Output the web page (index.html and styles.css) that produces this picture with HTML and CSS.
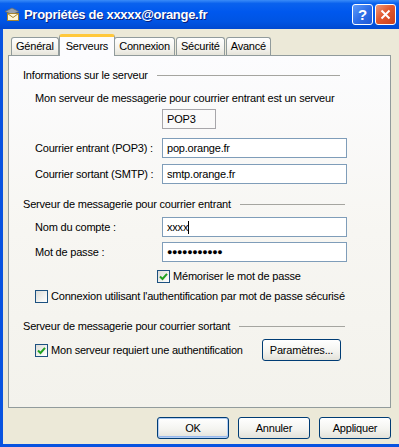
FILE: index.html
```html
<!DOCTYPE html>
<html lang="fr">
<head>
    <meta charset="UTF-8">
    <meta name="viewport" content="width=device-width, initial-scale=1.0">
    <title>Propriétés de xxxxx@orange.fr</title>
    <link rel="stylesheet" href="styles.css">
</head>
<body>
    <div class="window">
        <div class="titlebar">
            <svg class="title-icon" width="16" height="16" viewBox="0 0 16 16">
                <path d="M1 5.5 L8 2 L15 5.5 L8 8.5 Z" fill="#9aa3ad" stroke="#5d6670" stroke-width="0.8"/>
                <rect x="3.5" y="7.5" width="11" height="7" fill="#fdf6d8" stroke="#a6842f" stroke-width="1"/>
                <path d="M3.5 7.5 L9 11.5 L14.5 7.5" fill="none" stroke="#a6842f" stroke-width="1"/>
            </svg>
            <span class="title">Propriétés de xxxxx@orange.fr</span>
            <div class="title-buttons">
                <span class="tb-btn help">?</span>
                <span class="tb-btn close">
                    <svg width="11" height="11" viewBox="0 0 11 11">
                        <path d="M1.5 1.5 L9.5 9.5 M9.5 1.5 L1.5 9.5" stroke="#fff" stroke-width="2"/>
                    </svg>
                </span>
            </div>
        </div>

        <div class="frame">
            <div class="tabs">
                <div class="tab">Général</div>
                <div class="tab active">Serveurs</div>
                <div class="tab">Connexion</div>
                <div class="tab">Sécurité</div>
                <div class="tab">Avancé</div>
            </div>

            <div class="panel">
                <div class="group-title first">
                    <span>Informations sur le serveur</span>
                    <span class="rule"></span>
                </div>
                <p class="desc">Mon serveur de messagerie pour courrier entrant est un serveur</p>
                <div class="server-type">POP3</div>

                <div class="field-row row-in">
                    <label>Courrier entrant (POP3) :</label>
                    <div class="field">pop.orange.fr</div>
                </div>
                <div class="field-row">
                    <label>Courrier sortant (SMTP) :</label>
                    <div class="field">smtp.orange.fr</div>
                </div>

                <div class="group-title second">
                    <span>Serveur de messagerie pour courrier entrant</span>
                    <span class="rule"></span>
                </div>
                <div class="field-row">
                    <label>Nom du compte :</label>
                    <div class="field">xxxx<span class="caret"></span></div>
                </div>
                <div class="field-row row-pass">
                    <label>Mot de passe :</label>
                    <div class="field dots">●●●●●●●●●●●</div>
                </div>

                <div class="check check-remember">
                    <span class="box checked"><svg width="9" height="9" viewBox="0 0 9 9"><path d="M1 4.5 L3.5 7 L8 1.8" fill="none" stroke="#21a121" stroke-width="2"/></svg></span>
                    Mémoriser le mot de passe
                </div>
                <div class="check check-spa">
                    <span class="box"></span>
                    Connexion utilisant l'authentification par mot de passe sécurisé
                </div>

                <div class="group-title third">
                    <span>Serveur de messagerie pour courrier sortant</span>
                    <span class="rule"></span>
                </div>
                <div class="auth-row">
                    <div class="check">
                        <span class="box checked"><svg width="9" height="9" viewBox="0 0 9 9"><path d="M1 4.5 L3.5 7 L8 1.8" fill="none" stroke="#21a121" stroke-width="2"/></svg></span>
                        Mon serveur requiert une authentification
                    </div>
                    <button class="btn btn-settings">Paramètres...</button>
                </div>
            </div>

            <div class="actions">
                <button class="btn default">OK</button>
                <button class="btn">Annuler</button>
                <button class="btn">Appliquer</button>
            </div>
        </div>
    </div>
</body>
</html>
```

FILE: styles.css
```css
* {
    margin: 0;
    padding: 0;
    box-sizing: border-box;
}

body {
    font-family: 'Liberation Sans', Arial, sans-serif;
    font-size: 11px;
    letter-spacing: -0.2px;
    color: #000;
    background: #ece9d8;
}

.window {
    width: 399px;
    height: 447px;
    display: flex;
    flex-direction: column;
    background: #0853e0;
}

/* title bar */
.titlebar {
    height: 29px;
    flex: none;
    display: flex;
    align-items: center;
    padding: 0 3px 0 4px;
    background: linear-gradient(to bottom, #3a8cf8 0%, #0a62ee 12%, #0058ee 40%, #0054e3 75%, #0048d0 100%);
}

.title-icon {
    flex: none;
    margin-top: -1px;
}

.title {
    margin-left: 4px;
    color: #fff;
    font-weight: bold;
    font-size: 13px;
    letter-spacing: -0.3px;
    text-shadow: 1px 1px 0 #0a1e7a;
}

.title-buttons {
    margin-left: auto;
    display: flex;
    gap: 2px;
    margin-top: -1px;
}

.tb-btn {
    width: 21px;
    height: 21px;
    border: 1px solid #fff;
    border-radius: 3px;
    display: flex;
    align-items: center;
    justify-content: center;
    color: #fff;
}

.help {
    background: linear-gradient(135deg, #5f9cfa 0%, #2f6fe8 50%, #1f58d6 100%);
    font-weight: bold;
    font-size: 15px;
}

.close {
    background: linear-gradient(135deg, #f09a7c 0%, #e2582e 45%, #c8401c 100%);
}

/* dialog body */
.frame {
    flex: 1;
    margin: 0 0 3px 3px;
    background: #ece9d8;
    display: flex;
    flex-direction: column;
}

.tabs {
    height: 26px;
    flex: none;
    display: flex;
    align-items: flex-end;
    padding-left: 8px;
}

.tab {
    height: 18px;
    padding: 0 4px;
    margin-right: 1px;
    line-height: 17px;
    border: 1px solid #919b9c;
    border-bottom: none;
    border-radius: 3px 3px 0 0;
    background: linear-gradient(to bottom, #ffffff 0%, #f4f3ee 60%, #e6e4da 100%);
}

.tab.active {
    position: relative;
    z-index: 1;
    height: 22px;
    margin: 0 -1px -1px -1px;
    padding: 0 6px;
    line-height: 18px;
    border-top: 3px solid #ffc83c;
    background: #fcfcfe;
}

.panel {
    margin-left: 5px;
    width: 383px;
    height: 353px;
    border: 1px solid #919b9c;
    background: linear-gradient(to bottom, #fcfcfe 0%, #f7f6f2 50%, #f3f2ec 100%);
    padding: 13px 14px 0 14px;
    line-height: 13px;
}

.group-title {
    display: flex;
    align-items: center;
    margin-right: 31px;
}

.group-title.first {
    margin-right: 36px;
}

.group-title.second {
    margin-top: 14px;
}

.group-title.third {
    margin-top: 17px;
}

.rule {
    flex: 1;
    margin-left: 9px;
    border-top: 1px solid #a5a5a0;
}

.desc {
    margin: 10px 0 0 12px;
}

.server-type {
    margin: 4px 0 0 139px;
    width: 54px;
    height: 20px;
    padding: 3px 4px;
    border: 1px solid #a7a6aa;
}

.field-row {
    display: flex;
    align-items: center;
    margin: 6px 0 0 12px;
}

.field-row.row-in {
    margin-top: 9px;
}

.field-row.row-pass {
    margin-top: 5px;
}

.field-row label {
    width: 127px;
}

.field {
    width: 185px;
    height: 20px;
    padding: 3px 4px;
    border: 1px solid #7f9db9;
    background: #fff;
    display: flex;
    align-items: center;
}

.caret {
    width: 1px;
    height: 13px;
    background: #000;
}

.dots {
    font-size: 9px;
    letter-spacing: -0.4px;
}

.check {
    display: flex;
    align-items: center;
    gap: 3px;
    height: 13px;
}

.check-remember {
    margin: 8px 0 0 134px;
}

.check-spa {
    margin: 7px 0 0 12px;
}

.box {
    flex: none;
    width: 13px;
    height: 13px;
    border: 1px solid #1c5180;
    background: linear-gradient(135deg, #dcdcd7 0%, #f6f6f4 70%, #ffffff 100%);
    display: flex;
    align-items: center;
    justify-content: center;
}

.auth-row {
    display: flex;
    align-items: center;
    margin: 6px 35px 0 12px;
    height: 22px;
}

.btn {
    font-family: inherit;
    font-size: 11px;
    letter-spacing: -0.2px;
    color: #000;
    height: 22px;
    border: 1px solid #003c74;
    border-radius: 3px;
    background: linear-gradient(to bottom, #ffffff 0%, #f4f4f0 55%, #e3e2da 100%);
}

.btn-settings {
    margin-left: auto;
    width: 79px;
}

.actions {
    display: flex;
    justify-content: flex-end;
    gap: 9px;
    padding: 9px 8px 0 0;
}

.actions .btn {
    width: 72px;
}

.btn.default {
    box-shadow: inset 0 0 0 1px #b3cef4, inset 0 -1px 0 1px #97b8ec;
}
```
